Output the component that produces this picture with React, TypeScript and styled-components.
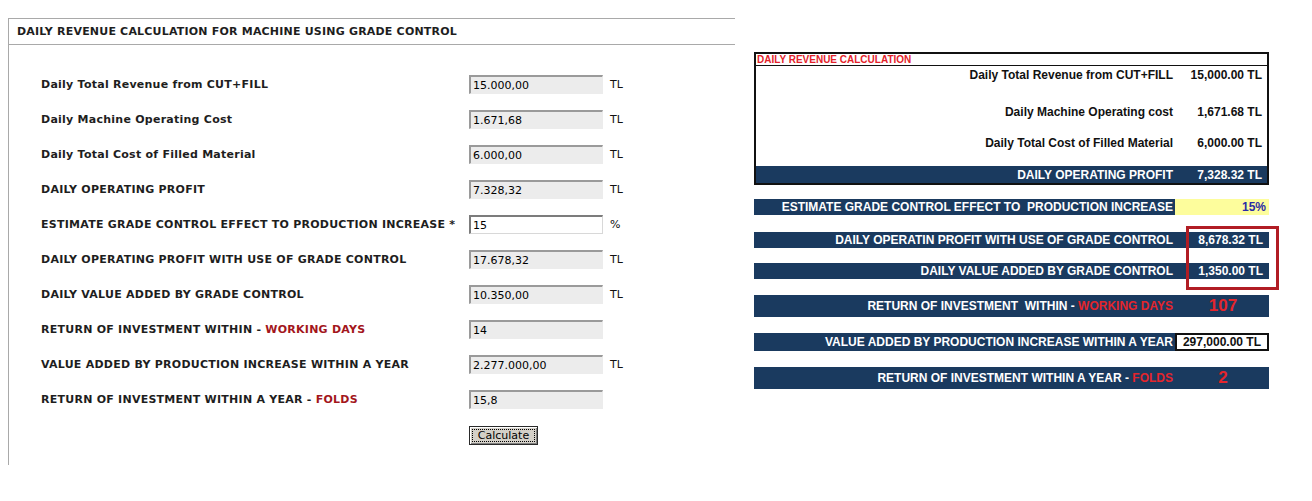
import React from "react";
import styled, { createGlobalStyle } from "styled-components";

const GlobalStyle = createGlobalStyle`
  html, body {
    margin: 0;
    padding: 0;
    background: #ffffff;
  }
`;

const Page = styled.div`
  display: flex;
  align-items: flex-start;
  gap: 19px;
  padding: 18px 0 0 8px;
`;

/* ---------- web form calculator ---------- */

const FormPanel = styled.section`
  width: 727px;
  height: 447px;
  box-sizing: border-box;
  border-top: 1px solid #a9a9a9;
  border-left: 1px solid #a9a9a9;
  font-family: "DejaVu Sans", Verdana, sans-serif;
  color: #1e1e1e;
`;

const FormTitle = styled.h1`
  margin: 0;
  height: 25px;
  line-height: 25px;
  padding-left: 8px;
  border-bottom: 1px solid #a9a9a9;
  font-size: 11px;
  font-weight: bold;
  letter-spacing: 0.2px;
`;

const FormBody = styled.div`
  padding: 22px 0 0 32px;
`;

const FormRow = styled.div`
  display: grid;
  grid-template-columns: 428px 134px auto;
  align-items: center;
  height: 35px;
`;

const FieldLabel = styled.label`
  font-size: 11px;
  font-weight: bold;
  letter-spacing: 0.25px;
  white-space: pre;
`;

const Accent = styled.span`
  color: #a3161c;
`;

const Field = styled.input<{ $editable?: boolean }>`
  box-sizing: border-box;
  width: 134px;
  height: 19px;
  margin: 0;
  padding: 0 2px;
  border: none;
  border-top: 2px solid ${(p) => (p.$editable ? "#7c7c7c" : "#9a9a9a")};
  border-left: 2px solid ${(p) => (p.$editable ? "#7c7c7c" : "#9a9a9a")};
  border-right: 1px solid ${(p) => (p.$editable ? "#d8d8d8" : "#ececec")};
  border-bottom: 1px solid ${(p) => (p.$editable ? "#d8d8d8" : "#ececec")};
  background: ${(p) => (p.$editable ? "#ffffff" : "#ececec")};
  font-family: "DejaVu Sans", Verdana, sans-serif;
  font-size: 11px;
  color: #000;
  outline: none;
`;

const Unit = styled.span`
  padding-left: 7px;
  font-size: 11px;
  color: #111;
`;

const ButtonRow = styled.div`
  padding: 7px 0 0 428px;
`;

const CalcButton = styled.button`
  box-sizing: border-box;
  width: 69px;
  height: 19px;
  padding: 0;
  background: #d4d0c8;
  border: 1px solid #2a2a2a;
  box-shadow: inset 1px 1px #ffffff, inset -1px -1px #808080;
  outline: 1px dotted #000;
  outline-offset: -4px;
  font-family: "DejaVu Sans", Verdana, sans-serif;
  font-size: 11px;
  color: #000;
`;

/* ---------- spreadsheet summary ---------- */

const navy = "#1a3a5f";

const Sheet = styled.section`
  position: relative;
  width: 515px;
  margin-top: 34px;
  font-family: "Liberation Sans", Arial, sans-serif;
  font-weight: bold;
  font-size: 12px;
`;

const SheetBox = styled.div`
  border: 2px solid #111;
`;

const SheetHeading = styled.div`
  height: 11px;
  line-height: 11px;
  padding-left: 1px;
  border-bottom: 1px solid #111;
  color: #e3222a;
  font-size: 10px;
`;

const SheetRow = styled.div<{ $top?: number; $dark?: boolean; $height?: number }>`
  display: grid;
  grid-template-columns: 419px 92px;
  height: ${(p) => p.$height ?? 18}px;
  margin-top: ${(p) => p.$top ?? 0}px;
  align-items: center;
  background: ${(p) => (p.$dark ? navy : "transparent")};
  color: ${(p) => (p.$dark ? "#ffffff" : "#111")};
`;

const RowLabel = styled.span`
  text-align: right;
  padding-right: 2px;
  white-space: pre;
`;

const RowValue = styled.span`
  text-align: right;
  padding-right: 5px;
  white-space: pre;
`;

const Bar = styled.div<{ $top: number; $height: number }>`
  display: grid;
  grid-template-columns: 421px 94px;
  height: ${(p) => p.$height}px;
  margin-top: ${(p) => p.$top}px;
  background: ${navy};
  color: #ffffff;
`;

const BarLabel = styled.div`
  display: flex;
  align-items: center;
  justify-content: flex-end;
  padding-right: 2px;
  white-space: pre;
`;

const BarRed = styled.span`
  color: #e4252c;
`;

type CellKind = "plain" | "input" | "boxed" | "big";

const BarCell = styled.div<{ $kind: CellKind }>`
  display: flex;
  align-items: center;
  justify-content: ${(p) => (p.$kind === "big" ? "center" : "flex-end")};
  box-sizing: border-box;
  padding-right: ${(p) => (p.$kind === "big" ? 0 : p.$kind === "input" ? 3 : 6)}px;
  padding-left: ${(p) => (p.$kind === "big" ? 2 : 0)}px;
  white-space: pre;
  background: ${(p) =>
    p.$kind === "input" ? "#fdfd9c" : p.$kind === "boxed" ? "#ffffff" : "transparent"};
  border: ${(p) => (p.$kind === "boxed" ? "2px solid #111" : "none")};
  color: ${(p) =>
    p.$kind === "input" ? "#2b2ba6" : p.$kind === "boxed" ? "#111" : p.$kind === "big" ? "#e4252c" : "#ffffff"};
  font-size: ${(p) => (p.$kind === "big" ? 17 : 12)}px;
`;

const Highlight = styled.div`
  position: absolute;
  left: 432px;
  top: 174px;
  width: 93px;
  height: 64px;
  box-sizing: border-box;
  border: 3px solid #b11d24;
  pointer-events: none;
`;

type FormItem = {
  label: React.ReactNode;
  value: string;
  unit?: string;
  editable?: boolean;
};

const formItems: FormItem[] = [
  { label: "Daily Total Revenue from CUT+FILL", value: "15.000,00", unit: "TL" },
  { label: "Daily Machine Operating Cost", value: "1.671,68", unit: "TL" },
  { label: "Daily Total Cost of Filled Material", value: "6.000,00", unit: "TL" },
  { label: "DAILY OPERATING PROFIT", value: "7.328,32", unit: "TL" },
  {
    label: "ESTIMATE GRADE CONTROL EFFECT TO PRODUCTION INCREASE *",
    value: "15",
    unit: " %",
    editable: true,
  },
  { label: "DAILY OPERATING PROFIT WITH USE OF GRADE CONTROL", value: "17.678,32", unit: "TL" },
  { label: "DAILY VALUE ADDED BY GRADE CONTROL", value: "10.350,00", unit: "TL" },
  {
    label: (
      <>
        RETURN OF INVESTMENT WITHIN - <Accent>WORKING DAYS</Accent>
      </>
    ),
    value: "14",
  },
  { label: "VALUE ADDED BY PRODUCTION INCREASE WITHIN A YEAR", value: "2.277.000,00", unit: "TL" },
  {
    label: (
      <>
        RETURN OF INVESTMENT WITHIN A YEAR - <Accent>FOLDS</Accent>
      </>
    ),
    value: "15,8",
  },
];

export default function App() {
  return (
    <>
      <GlobalStyle />
      <Page>
        <FormPanel>
          <FormTitle>DAILY REVENUE CALCULATION FOR MACHINE USING GRADE CONTROL</FormTitle>
          <FormBody>
            {formItems.map((item, i) => (
              <FormRow key={i}>
                <FieldLabel>{item.label}</FieldLabel>
                <Field
                  $editable={item.editable}
                  defaultValue={item.value}
                  readOnly={!item.editable}
                />
                <Unit>{item.unit ?? ""}</Unit>
              </FormRow>
            ))}
            <ButtonRow>
              <CalcButton type="button">Calculate</CalcButton>
            </ButtonRow>
          </FormBody>
        </FormPanel>

        <Sheet>
          <SheetBox>
            <SheetHeading>DAILY REVENUE CALCULATION</SheetHeading>
            <SheetRow>
              <RowLabel>Daily Total Revenue from CUT+FILL</RowLabel>
              <RowValue>15,000.00 TL</RowValue>
            </SheetRow>
            <SheetRow $top={19}>
              <RowLabel>Daily Machine Operating cost</RowLabel>
              <RowValue>1,671.68 TL</RowValue>
            </SheetRow>
            <SheetRow $top={13}>
              <RowLabel>Daily Total Cost of Filled Material</RowLabel>
              <RowValue>6,000.00 TL</RowValue>
            </SheetRow>
            <SheetRow $top={14} $height={17} $dark>
              <RowLabel>DAILY OPERATING PROFIT</RowLabel>
              <RowValue>7,328.32 TL</RowValue>
            </SheetRow>
          </SheetBox>

          <Bar $top={14} $height={16}>
            <BarLabel>ESTIMATE GRADE CONTROL EFFECT TO  PRODUCTION INCREASE</BarLabel>
            <BarCell $kind="input">15%</BarCell>
          </Bar>
          <Bar $top={17} $height={16}>
            <BarLabel>DAILY OPERATIN PROFIT WITH USE OF GRADE CONTROL</BarLabel>
            <BarCell $kind="plain">8,678.32 TL</BarCell>
          </Bar>
          <Bar $top={15} $height={16}>
            <BarLabel>DAILY VALUE ADDED BY GRADE CONTROL</BarLabel>
            <BarCell $kind="plain">1,350.00 TL</BarCell>
          </Bar>
          <Bar $top={16} $height={22}>
            <BarLabel>
              RETURN OF INVESTMENT  WITHIN - <BarRed>WORKING DAYS</BarRed>
            </BarLabel>
            <BarCell $kind="big">107</BarCell>
          </Bar>
          <Bar $top={16} $height={18}>
            <BarLabel>VALUE ADDED BY PRODUCTION INCREASE WITHIN A YEAR</BarLabel>
            <BarCell $kind="boxed">297,000.00 TL</BarCell>
          </Bar>
          <Bar $top={16} $height={22}>
            <BarLabel>
              RETURN OF INVESTMENT WITHIN A YEAR - <BarRed>FOLDS</BarRed>
            </BarLabel>
            <BarCell $kind="big">2</BarCell>
          </Bar>

          <Highlight />
        </Sheet>
      </Page>
    </>
  );
}
